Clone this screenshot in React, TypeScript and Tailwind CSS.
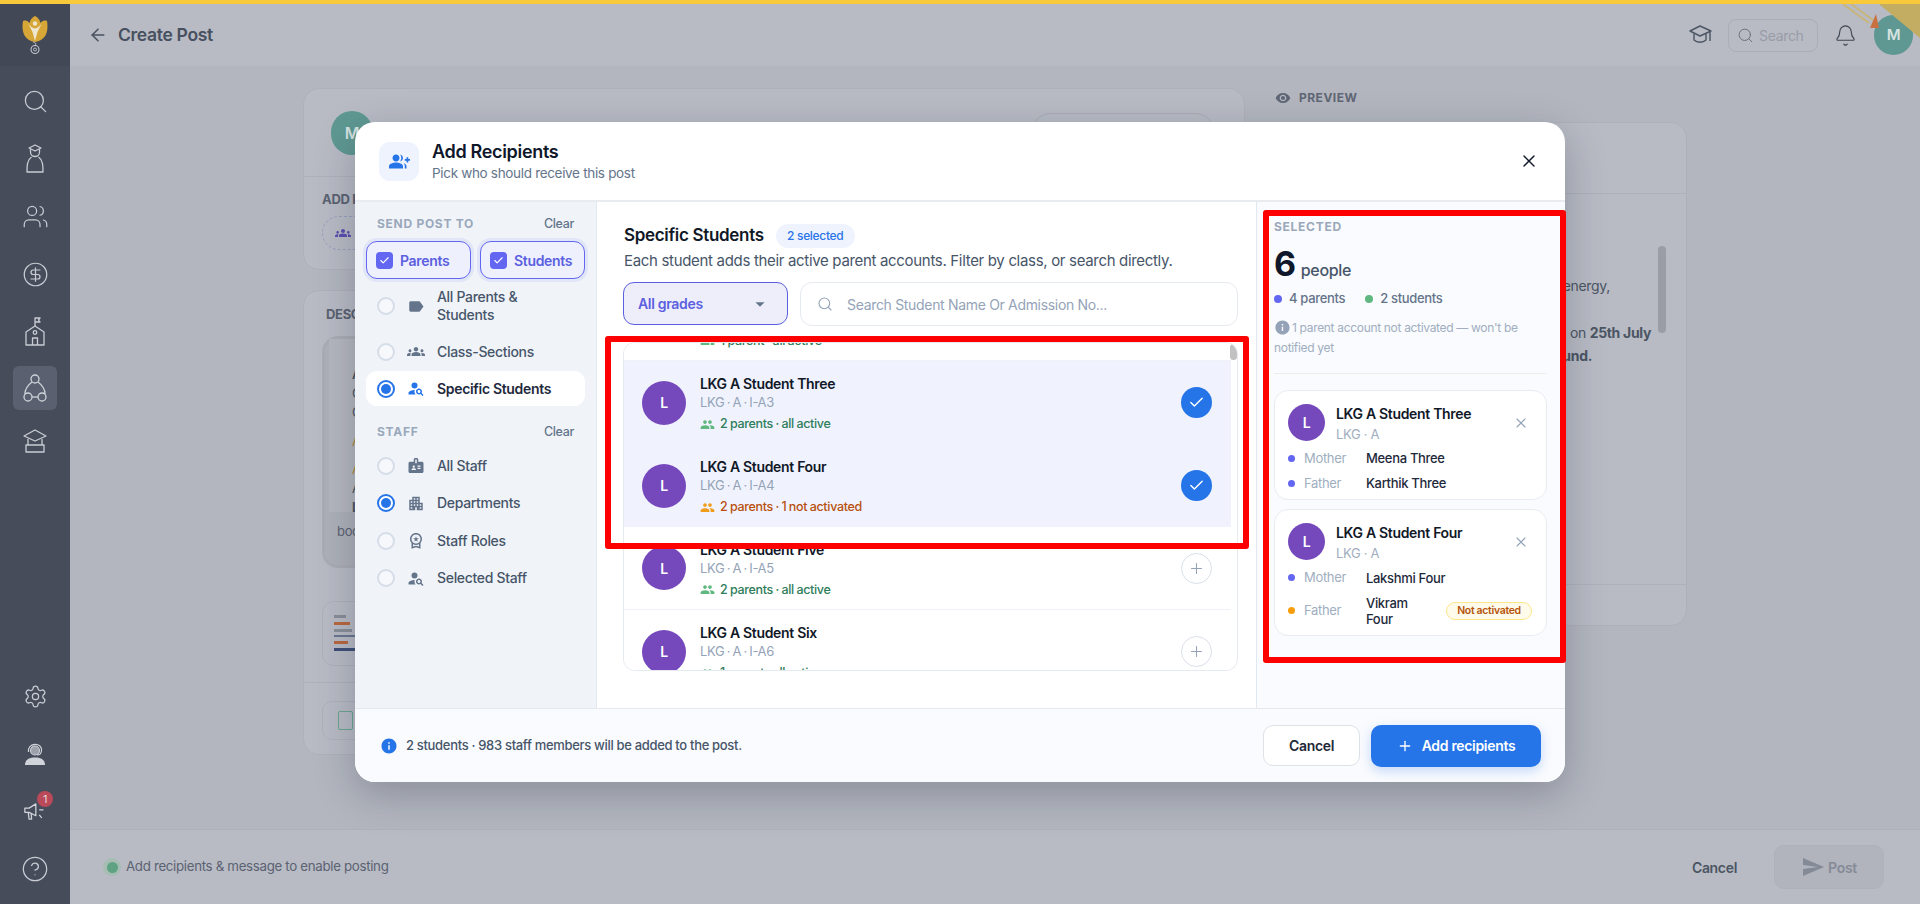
import React from 'react';
import { ArrowLeft, Bell, Check, CircleDollarSign, CircleHelp, Plus, Search, Settings, Users, X } from 'lucide-react';
import {
  MdApartment,
  MdArrowDropDown,
  MdBadge,
  MdGroupAdd,
  MdGroups,
  MdInfo,
  MdLabel,
  MdOutlineWorkspacePremium,
  MdPeople,
  MdPersonSearch,
  MdRemoveRedEye,
  MdSend,
} from 'react-icons/md';

const Logo = () => (
  <svg width="26" height="39" viewBox="0 0 26 39">
    <path d="M1 5 C4 4 6 5 7.5 7 C8.5 3 10.5 1 13 0 C15.5 1 17.5 3 18.5 7 C20 5 22 4 25 5 C26.5 14 25 24 13 26 C1 24 -0.5 14 1 5Z" fill="#d6a636" />
    <circle cx="13" cy="7.5" r="2.2" fill="#efe6cf" />
    <path d="M5.5 6 C8 11 11 12 13 12.5 C15 12 18 11 20.5 6 L15.5 16 L13 25 L10.5 16Z" fill="#efe6cf" />
    <circle cx="13" cy="33.5" r="4" fill="none" stroke="#c5c8d0" strokeWidth="1.1" />
    <circle cx="13" cy="33.5" r="1.5" fill="none" stroke="#c5c8d0" strokeWidth="0.9" />
    <path d="M11 26 C13 27 15 27 13 29.5" fill="none" stroke="#c5c8d0" strokeWidth="1" />
  </svg>
);

const StudentIcon = () => (
  <svg width="24" height="30" viewBox="0 0 24 30" fill="none" stroke="#c9ccd3" strokeWidth="1.3" strokeLinejoin="round">
    <path d="M12 1 L18 4 L12 7 L6 4Z" />
    <path d="M7.5 5 v3 a4.5 4.5 0 0 0 9 0 v-3" />
    <path d="M8.5 13 C4 16 4 22 4 28 H20 C20 22 20 16 15.5 13" />
  </svg>
);

const SchoolIcon = () => (
  <svg width="22" height="30" viewBox="0 0 22 30" fill="none" stroke="#c9ccd3" strokeWidth="1.3" strokeLinejoin="round">
    <path d="M11 9 V1 H16 L14.5 3 L16 5 H11" />
    <path d="M2 28 V15 L11 9 L20 15 V28Z" />
    <circle cx="11" cy="15.5" r="1.8" />
    <path d="M8.5 28 V21 H13.5 V28" />
  </svg>
);

const NetworkIcon = () => (
  <svg width="26" height="30" viewBox="0 0 26 30" fill="none" stroke="#d0d3d9" strokeWidth="1.3">
    <circle cx="13" cy="6" r="4" />
    <circle cx="6" cy="24" r="4" />
    <circle cx="20" cy="24" r="4" />
    <path d="M10 9 C6 12 3 16 3 21" />
    <path d="M16 9 C20 12 23 16 23 21" />
    <path d="M10 24 H16" />
  </svg>
);

const CapIcon = () => (
  <svg width="26" height="26" viewBox="0 0 26 26" fill="none" stroke="#c9ccd3" strokeWidth="1.3" strokeLinejoin="round">
    <path d="M13 2 L24 8 L13 13 L2 8Z" />
    <path d="M6 11 V17 M20 11 V17" />
    <path d="M4 17 H22 V24 H4Z" />
  </svg>
);

const SupportIcon = () => (
  <svg width="24" height="24" viewBox="0 0 24 24" fill="none">
    <circle cx="12" cy="8.5" r="4.5" fill="#9da1ab" stroke="#d0d3d9" strokeWidth="1.1" />
    <path d="M5.5 10 C4 0 20 0 18.5 9 C18 12 16 13 14 13" stroke="#d0d3d9" strokeWidth="1.2" />
    <path d="M2 23 C2 17 7 15.5 12 15.5 C17 15.5 22 17 22 23Z" fill="#d0d3d9" />
  </svg>
);

const MegaphoneIcon = () => (
  <svg width="22" height="19" viewBox="0 0 26 22" fill="none" stroke="#d0d3d9" strokeWidth="1.5" strokeLinejoin="round">
    <path d="M1 7 H6 L14 2 V16 L6 12 H1Z" />
    <path d="M5 12 L6 20 H9 L8.5 13.5" />
    <path d="M18 9 H23 M18 15 L21 18.5" />
  </svg>
);

const Radio = ({ checked }: { checked: boolean }) =>
  checked ? (
    <span className="flex h-[18px] w-[18px] shrink-0 items-center justify-center rounded-full border-[2px] border-[#2574e8] bg-white">
      <span className="h-[10px] w-[10px] rounded-full bg-[#2574e8]" />
    </span>
  ) : (
    <span className="h-[18px] w-[18px] shrink-0 rounded-full border-[2px] border-[#d5dde8] bg-[#f6f8fb]" />
  );

const SectionHead = ({ label }: { label: string }) => (
  <div className="flex h-[20px] items-center justify-between px-[11px]">
    <span className="text-[12px] font-bold tracking-[0.06em] text-[#9aa8bb]">{label}</span>
    <span className="text-[12.5px] font-medium text-[#64748b]">Clear</span>
  </div>
);

const OptionRow = ({
  icon,
  label,
  checked = false,
  active = false,
}: {
  icon: React.ReactNode;
  label: string;
  checked?: boolean;
  active?: boolean;
}) => (
  <div className={`flex items-center gap-3 rounded-[11px] px-[11px] py-[8px] ${active ? 'bg-white' : ''}`}>
    <Radio checked={checked} />
    <span className={`flex w-[18px] shrink-0 justify-center text-[19px] ${active ? 'text-[#2574e8]' : 'text-[#64748b]'}`}>{icon}</span>
    <span className={`text-[14px] leading-[18px] ${active ? 'font-semibold text-[#1e293b]' : 'font-medium text-[#475569]'}`}>{label}</span>
  </div>
);

const TypeChip = ({ label }: { label: string }) => (
  <div className="flex h-[38px] w-[105px] items-center gap-[7px] rounded-[11px] border-[1.5px] border-[#6366f1] bg-[#eef0fe] pl-[9px] shadow-[0_0_0_3px_rgba(99,102,241,0.1)]">
    <span className="flex h-[17px] w-[17px] items-center justify-center rounded-[4px] bg-[#6366f1]">
      <Check size={11} color="white" strokeWidth={2.5} />
    </span>
    <span className="text-[14px] font-semibold text-[#5b5fe0]">{label}</span>
  </div>
);

const Avatar = ({ size }: { size: string }) => (
  <span className={`flex shrink-0 items-center justify-center rounded-full bg-[#7549bb] text-[14px] font-semibold text-white ${size}`}>L</span>
);

const students = [
  { name: 'LKG A Student Two', code: 'LKG · A · I-A2', note: '1 parent · all active', warn: false, picked: false, line: true },
  { name: 'LKG A Student Three', code: 'LKG · A · I-A3', note: '2 parents · all active', warn: false, picked: true, line: false },
  { name: 'LKG A Student Four', code: 'LKG · A · I-A4', note: '2 parents · 1 not activated', warn: true, picked: true, line: false },
  { name: 'LKG A Student Five', code: 'LKG · A · I-A5', note: '2 parents · all active', warn: false, picked: false, line: true },
  { name: 'LKG A Student Six', code: 'LKG · A · I-A6', note: '1 parent · all active', warn: false, picked: false, line: false },
];

const StudentRow = ({ s }: { s: (typeof students)[number] }) => (
  <div className={`flex h-[83px] items-center pl-[18px] pr-[19px] ${s.picked ? 'bg-[#f0f3fd]' : 'bg-white'} ${s.line ? 'border-b border-[#eef1f5]' : ''}`}>
    <Avatar size="h-[44px] w-[44px]" />
    <div className="ml-[14px] flex-1 pt-[4px]">
      <div className="text-[14px] font-semibold leading-[18px] text-[#111827]">{s.name}</div>
      <div className="text-[13px] leading-[18px] text-[#94a3b8] [word-spacing:-1px]">{s.code}</div>
      <div className={`mt-[3px] flex items-center gap-[5px] text-[12.5px] font-medium leading-[20px] [word-spacing:-0.5px] ${s.warn ? 'text-[#b8500f]' : 'text-[#2e7d5b]'}`}>
        <MdPeople size={15} className={s.warn ? 'text-[#f09d1e]' : 'text-[#5fb87f]'} />
        {s.note}
      </div>
    </div>
    {s.picked ? (
      <span className="flex h-[31px] w-[31px] items-center justify-center rounded-full bg-[#2574e8]">
        <Check size={17} color="white" strokeWidth={2} />
      </span>
    ) : (
      <span className="flex h-[31px] w-[31px] items-center justify-center rounded-full border border-[#d9dfe8] bg-white">
        <Plus size={17} color="#94a3b8" strokeWidth={1.5} />
      </span>
    )}
  </div>
);

const ParentLine = ({ role, name, dot, badge }: { role: string; name: string; dot: string; badge?: boolean }) => (
  <div className="flex items-center">
    <span className={`h-[7px] w-[7px] shrink-0 rounded-full ${dot}`} />
    <span className="ml-[9px] w-[62px] shrink-0 text-[13px] text-[#a0aec0]">{role}</span>
    <span className={`text-[13px] font-medium leading-[16px] text-[#1e293b] ${badge ? 'w-[60px]' : 'flex-1'}`}>{name}</span>
    {badge && (
      <span className="ml-[20px] flex h-[18px] w-[86px] shrink-0 items-center justify-center rounded-full border border-[#fde68a] bg-[#fffbeb] text-[10.5px] font-semibold text-[#b45309]">
        Not activated
      </span>
    )}
  </div>
);

const SelectedCard = ({ name, children }: { name: string; children: React.ReactNode }) => (
  <div className="rounded-[14px] border border-[#e8ecf2] bg-white px-[13px] pt-[13px]">
    <div className="flex items-start">
      <Avatar size="h-[37px] w-[37px]" />
      <div className="ml-[11px] flex-1">
        <div className="text-[14px] font-semibold leading-[20px] text-[#111827]">{name}</div>
        <div className="text-[13px] leading-[20px] text-[#a0aec0]">LKG · A</div>
      </div>
      <X size={16} color="#94a3b8" strokeWidth={1.6} className="mr-[4px] mt-[11px]" />
    </div>
    {children}
  </div>
);

const navTop = [
  <Search size={27} strokeWidth={1.1} />,
  <StudentIcon />,
  <Users size={27} strokeWidth={1.1} />,
  <CircleDollarSign size={27} strokeWidth={1.1} />,
  <SchoolIcon />,
];

const Background = () => (
  <div className="flex h-full flex-col">
    <div className="h-[4px] shrink-0 bg-[#f9c93c]" />
    <div className="flex min-h-0 flex-1">
      <aside className="flex w-[70px] shrink-0 flex-col items-center bg-[#474c5b] text-[#c9ccd3]">
        <div className="flex h-[62px] w-full shrink-0 items-center justify-center bg-[#434857]">
          <Logo />
        </div>
        <div className="mt-[7px] flex flex-col items-center">
          {navTop.map((icon, i) => (
            <div key={i} className="flex h-[57.5px] items-center justify-center">
              {icon}
            </div>
          ))}
        </div>
        <div className="mt-[5px] flex h-[44px] w-[44px] items-center justify-center rounded-[6px] bg-[#5a6070]">
          <NetworkIcon />
        </div>
        <div className="mt-[18px]">
          <CapIcon />
        </div>
        <div className="mt-auto mb-[6px] flex flex-col items-center">
          <div className="flex h-[57.5px] items-center justify-center">
            <Settings size={25} strokeWidth={1.2} />
          </div>
          <div className="flex h-[57.5px] items-center justify-center">
            <SupportIcon />
          </div>
          <div className="relative flex h-[57.5px] items-center justify-center">
            <MegaphoneIcon />
            <span className="absolute -right-[7px] top-[8px] flex h-[16px] w-[16px] items-center justify-center rounded-full bg-[#b84a5a] text-[11px] text-[#e8d5d8]">1</span>
          </div>
          <div className="flex h-[57.5px] items-center justify-center">
            <CircleHelp size={28} strokeWidth={1.1} />
          </div>
        </div>
      </aside>
      <div className="flex min-w-0 flex-1 flex-col bg-[#b3b6bf]">
        <header className="flex h-[62px] shrink-0 items-center bg-[#b8bbc4] pl-[18px] pr-[7px]">
          <ArrowLeft size={20} color="#47505f" strokeWidth={1.8} />
          <span className="ml-[10px] text-[17.5px] font-semibold text-[#47505f]">Create Post</span>
          <svg width="24" height="24" viewBox="0 0 24 24" fill="none" stroke="#4b5563" strokeWidth="1.4" strokeLinejoin="round" className="ml-auto">
            <path d="M11 3 L22 8 L11 13 L1 8Z" />
            <path d="M5 11 V17 C8 20 14 20 17 17 V11" />
            <path d="M21 8 V18" />
          </svg>
          <div className="ml-[15px] flex h-[33px] w-[90px] items-center gap-[5px] rounded-[8px] border border-[#a9adb7] pl-[8px]">
            <Search size={17} color="#656b78" strokeWidth={1.3} />
            <span className="text-[14px] text-[#989ca8]">Search</span>
          </div>
          <Bell size={23} color="#3f4653" strokeWidth={1.2} className="ml-[16px]" />
          <span className="relative ml-[17px] flex h-[40px] w-[39px] items-center justify-center rounded-full bg-[#5f9892] text-[15px] font-semibold text-[#d5e3e1]">M</span>
        </header>
        <main className="flex min-h-0 flex-1 pl-[233px] pt-[22px]">
          <div className="w-[942px] shrink-0">
            <div className="h-[182px] rounded-[16px] border border-[#aeb1ba] bg-[#b8bbc4] px-[18px] pt-[22px]">
              <div className="flex h-[44px] items-center justify-between">
                <span className="ml-[9px] flex h-[44px] w-[42px] items-center justify-center rounded-full bg-[#5f9892] text-[16px] font-semibold text-[#d5e3e1]">M</span>
                <span className="mr-[11px] h-[40px] w-[184px] rounded-full border border-[#a9adb7]" />
              </div>
              <div className="-mx-[18px] mt-[21px] border-t border-[#aeb1ba]" />
              <div className="mt-[13px] text-[13px] font-bold text-[#5b6272]">ADD RECIPIENTS</div>
              <div className="mt-[6px] flex h-[34px] w-[120px] items-center rounded-full border border-dashed border-[#9aa0c0] pl-[12px] text-[16px] text-[#5b4fb0]">
                <MdGroups />
              </div>
            </div>
            <div className="mt-[20px] h-[465px] rounded-[16px] border border-[#aeb1ba] bg-[#b8bbc4] px-[18px] pt-[14px]">
              <div className="pl-[4px] text-[13px] font-bold text-[#5b6272]">DESCRIPTION</div>
              <div className="mt-[11px] h-[232px] rounded-[16px] border-[3px] border-[#aaadb5] bg-[#aeb1b9]">
                <div className="ml-[4px] h-[173px] bg-[#b5b8c0] pl-[23px] pt-[26px] text-[13px] leading-[19px] text-[#4b5563]">
                  <div className="font-semibold">A</div>
                  <div>C</div>
                  <div>C</div>
                  <div className="mt-[10px] text-[#b08a3c]">A</div>
                  <div className="mt-[9px] text-[#b08a3c]">A</div>
                  <div>A</div>
                  <div className="font-bold">L</div>
                </div>
                <div className="pl-[12px] pt-[10px] text-[13px] text-[#5b6272]">boo</div>
              </div>
              <div className="mt-[33px] flex h-[65px] items-center rounded-[12px] border border-[#aeb1ba] pl-[11px]">
                <div className="flex h-[36px] w-[24px] flex-col justify-between overflow-hidden">
                  <span className="h-[3px] w-[12px] bg-[#8a8f99]" />
                  <span className="h-[3px] w-[16px] bg-[#b9683f]" />
                  <span className="h-[3px] w-[18px] bg-[#8a8f99]" />
                  <span className="h-[2px] w-[22px] bg-[#6a7690]" />
                  <span className="h-[3px] w-[14px] bg-[#b9683f]" />
                  <span className="h-[3px] w-[22px] bg-[#3f4f78]" />
                </div>
              </div>
              <div className="-mx-[18px] mt-[16px] border-t border-[#aeb1ba]" />
              <div className="mt-[18px] flex h-[39px] items-center rounded-[10px] border border-[#aeb1ba] pl-[15px]">
                <span className="h-[19px] w-[15px] rounded-[2px] border border-[#6ba590]" />
              </div>
            </div>
          </div>
          <div className="ml-[25px] w-[417px] shrink-0">
            <div className="flex items-center gap-[8px] pl-[5px] pt-[1px] text-[12px] font-bold tracking-[0.04em] text-[#5f6675]">
              <MdRemoveRedEye size={16} />
              PREVIEW
            </div>
            <div className="mt-[15px] h-[504px] rounded-[16px] border border-[#aeb1ba] bg-[#b8bbc4]">
              <div className="mt-[70px] border-t border-[#aeb1ba]" />
              <div className="relative h-[390px]">
                <div className="flex flex-col items-end pt-[80px] text-[14px] leading-[23px] text-[#4b5563]">
                  <div className="mr-[76px]">energy,</div>
                  <div className="mr-[35px] mt-[24px]">
                    on <b>25th July</b>
                  </div>
                  <div className="mr-[94px] font-bold">und.</div>
                </div>
                <span className="absolute right-[20px] top-[52px] h-[87px] w-[8px] rounded-full bg-[#9a9da6]" />
              </div>
              <div className="border-t border-[#aeb1ba]" />
            </div>
          </div>
        </main>
        <footer className="flex h-[75px] shrink-0 items-center border-t border-[#aeb1ba] bg-[#b8bbc4] pl-[33px] pr-[36px]">
          <span className="flex h-[18px] w-[18px] items-center justify-center rounded-full bg-[#a5bdb3]">
            <span className="h-[11px] w-[11px] rounded-full bg-[#5fa283]" />
          </span>
          <span className="ml-[5px] text-[13.3px] text-[#5b6272]">Add recipients &amp; message to enable posting</span>
          <span className="ml-auto text-[14px] font-semibold text-[#4b5563]">Cancel</span>
          <div className="ml-[37px] flex h-[44px] w-[110px] items-center justify-center gap-[3px] rounded-[10px] border border-[#aeb1ba] bg-[#b1b4bd] text-[14px] font-semibold text-[#858a97]">
            <MdSend size={24} />
            Post
          </div>
        </footer>
      </div>
    </div>
  </div>
);

const RecipientsModal = () => (
  <div className="flex h-[660px] w-[1210px] flex-col overflow-hidden rounded-[20px] bg-white shadow-[0_12px_40px_rgba(15,23,42,0.25)]">
    <div className="flex h-[80px] shrink-0 items-center border-b-[2px] border-[#e8ebf0] pl-[24px] pr-[26px]">
      <span className="flex h-[39px] w-[40px] items-center justify-center rounded-[11px] bg-[#eef3fe] text-[21px] text-[#2574e8]">
        <MdGroupAdd />
      </span>
      <div className="ml-[13px]">
        <div className="text-[18px] font-semibold leading-[24px] text-[#0f172a]">Add Recipients</div>
        <div className="text-[13.5px] leading-[18px] text-[#64748b]">Pick who should receive this post</div>
      </div>
      <X size={20} color="#111827" strokeWidth={1.7} className="ml-auto" />
    </div>

    <div className="flex min-h-0 flex-1">
      <div className="w-[242px] shrink-0 border-r border-[#e2e8f0] bg-[#f0f4f9] px-[11px] pt-[12px]">
        <SectionHead label="SEND POST TO" />
        <div className="mt-[7px] flex gap-[9px]">
          <TypeChip label="Parents" />
          <TypeChip label="Students" />
        </div>
        <div className="mt-[1px] flex flex-col gap-[2px]">
          <OptionRow icon={<MdLabel />} label="All Parents & Students" />
          <OptionRow icon={<MdGroups />} label="Class-Sections" />
          <OptionRow icon={<MdPersonSearch />} label="Specific Students" checked active />
        </div>
        <div className="mt-[16px]">
          <SectionHead label="STAFF" />
        </div>
        <div className="mt-[6px] flex flex-col gap-[2.5px]">
          <OptionRow icon={<MdBadge />} label="All Staff" />
          <OptionRow icon={<MdApartment />} label="Departments" checked />
          <OptionRow icon={<MdOutlineWorkspacePremium />} label="Staff Roles" />
          <OptionRow icon={<MdPersonSearch />} label="Selected Staff" />
        </div>
      </div>

      <div className="min-w-0 flex-1 px-[18px] pt-[22px]">
        <div className="ml-[9px] flex h-[24px] items-center gap-[12px]">
          <span className="text-[17px] font-semibold text-[#111827]">Specific Students</span>
          <span className="flex h-[24px] w-[79px] items-center justify-center rounded-full bg-[#eef3fe] text-[12px] font-medium text-[#2b74e8]">2 selected</span>
        </div>
        <div className="ml-[9px] mt-[3px] text-[15px] leading-[20px] text-[#475569]">Each student adds their active parent accounts. Filter by class, or search directly.</div>
        <div className="ml-[8px] mt-[11px] flex gap-[12px]">
          <div className="flex h-[43px] w-[165px] items-center justify-between rounded-[11px] border-[1.5px] border-[#5b5fe0] bg-[#eeeefa] pl-[14px] pr-[16px] text-[14px] font-semibold text-[#5b5fe0]">
            All grades
            <MdArrowDropDown size={22} color="#64748b" />
          </div>
          <div className="flex h-[44px] flex-1 items-center rounded-[12px] border border-[#e5e9f0] pl-[16px] text-[14px] text-[#94a3b8]">
            <Search size={16} strokeWidth={1.6} />
            <span className="ml-[14px]">Search Student Name Or Admission No...</span>
          </div>
        </div>
        <div className="relative ml-[8px] mt-[16px] h-[329px] overflow-hidden rounded-[12px] border border-[#e5e9f0] pr-[6px]">
          <div className="-mt-[65px]">
            {students.map((s) => (
              <StudentRow key={s.name} s={s} />
            ))}
          </div>
          <span className="absolute right-0 top-[1px] h-[16px] w-[7px] rounded-full bg-[#c1c1c1]" />
        </div>
      </div>

      <div className="w-[309px] shrink-0 border-l border-[#e2e8f0] bg-[#fafbfe] pl-[17px] pr-[18px] pt-[17px]">
        <div className="text-[12px] font-bold leading-[16px] tracking-[0.06em] text-[#9aa8bb]">SELECTED</div>
        <div className="mt-[11px] flex items-baseline gap-[5px]">
          <span className="text-[34px] font-bold leading-[36px] text-[#0f172a]">6</span>
          <span className="text-[16px] font-medium text-[#475569]">people</span>
        </div>
        <div className="mt-[7px] flex items-center text-[13px] font-medium text-[#64748b]">
          <span className="h-[8px] w-[8px] rounded-full bg-[#6366f1]" />
          <span className="ml-[7px]">4 parents</span>
          <span className="ml-[20px] h-[8px] w-[8px] rounded-full bg-[#5fb87f]" />
          <span className="ml-[7px]">2 students</span>
        </div>
        <div className="mt-[9px] text-[12px] leading-[20px] text-[#a0aec0]">
          <MdInfo size={17} className="mr-[1px] inline-block align-[-4px] text-[#94a3b8]" />1 parent account not activated — won&apos;t be notified yet
        </div>
        <div className="mt-[15px] border-t border-[#f0ece8]" />
        <div className="mt-[16px] flex flex-col gap-[9px]">
          <SelectedCard name="LKG A Student Three">
            <div className="mt-[5px] flex flex-col gap-[5.5px] pb-[6px]">
              <ParentLine role="Mother" name="Meena Three" dot="bg-[#6366f1]" />
              <ParentLine role="Father" name="Karthik Three" dot="bg-[#6366f1]" />
            </div>
          </SelectedCard>
          <SelectedCard name="LKG A Student Four">
            <div className="mt-[5px] flex flex-col gap-[7px] pb-[8px]">
              <ParentLine role="Mother" name="Lakshmi Four" dot="bg-[#6366f1]" />
              <ParentLine role="Father" name="Vikram Four" dot="bg-[#f59e0b]" badge />
            </div>
          </SelectedCard>
        </div>
      </div>
    </div>

    <div className="flex h-[74px] shrink-0 items-center border-t border-[#e2e8f0] bg-[#fafbfe] pl-[25px] pr-[24px]">
      <MdInfo size={18} color="#2574e8" />
      <span className="ml-[8px] text-[13px] font-medium text-[#475569]">2 students · 983 staff members will be added to the post.</span>
      <button className="ml-auto h-[41px] w-[97px] rounded-[10px] border border-[#dde1e8] bg-white text-[14px] font-semibold text-[#1f2937]">Cancel</button>
      <button className="ml-[11px] flex h-[42px] w-[170px] items-center justify-center gap-[9px] rounded-[10px] bg-[#2574e8] text-[14px] font-semibold text-white shadow-[0_4px_12px_rgba(37,116,232,0.25)]">
        <Plus size={16} strokeWidth={2} />
        Add recipients
      </button>
    </div>
  </div>
);

export default function App() {
  return (
    <div className="relative h-[904px] w-[1920px] overflow-hidden font-['Inter',sans-serif] tracking-[-0.02em]">
      <Background />

      {/* corner ribbon of the page header */}
      <svg className="absolute right-0 top-[4px]" width="77" height="70" viewBox="0 0 77 70">
        <path d="M0 0 L26 19 M8 0 L30 16" stroke="#c7b57a" strokeWidth="2" fill="none" />
        <path d="M36 0 H77 V34Z" fill="#c3ad62" />
        <path d="M33 10 L27 24 H36Z" fill="#c8703f" />
      </svg>

      <div className="absolute inset-0 flex items-center justify-center">
        <RecipientsModal />
      </div>

      {/* red markup boxes drawn over the screenshot */}
      <div className="absolute left-[605px] top-[336px] h-[213px] w-[644px] rounded-[3px] border-[6px] border-[#ff0000]" />
      <div className="absolute left-[1263px] top-[210px] h-[453px] w-[303px] rounded-[3px] border-[6px] border-[#ff0000]" />
    </div>
  );
}
